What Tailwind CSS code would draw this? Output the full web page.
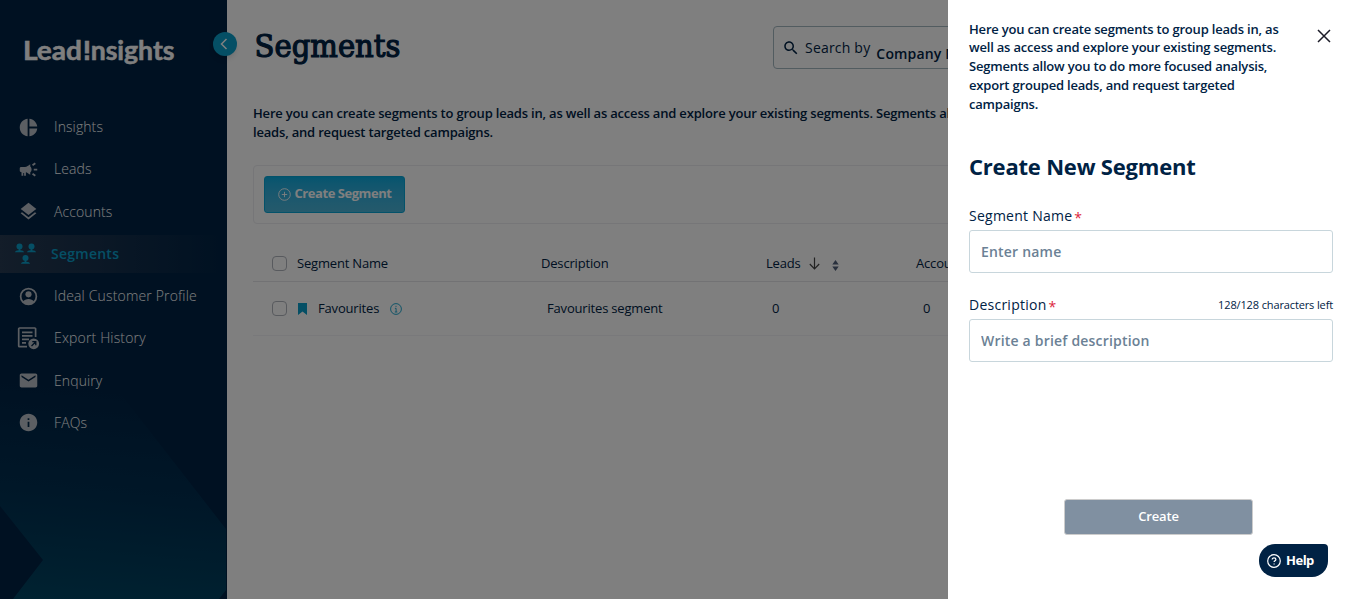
<!DOCTYPE html>
<html lang="en">
<head>
  <meta charset="UTF-8" />
  <meta name="viewport" content="width=device-width, initial-scale=1.0" />
  <title>LeadInsights - Segments</title>
  <script src="https://cdn.jsdelivr.net/npm/@tailwindcss/browser@4"></script>
</head>
<body class="h-screen overflow-hidden bg-white font-['Open_Sans',sans-serif] text-[#002244]">
  <div class="flex h-full w-full">

    <!-- Sidebar -->
    <aside class="relative h-full w-[227px] shrink-0 bg-[#002244] pt-[33px]">
      <svg class="absolute bottom-0 left-0" width="227" height="219" viewBox="0 0 227 219">
        <defs>
          <linearGradient id="chevron" x1="0.35" y1="0" x2="0.25" y2="1">
            <stop offset="0" stop-color="#002244" />
            <stop offset="0.5" stop-color="#002e50" />
            <stop offset="1" stop-color="#004462" />
          </linearGradient>
        </defs>
        <path d="M0 0H110L226 149V210L219 219H13L43 180L0 126Z" fill="url(#chevron)" />
      </svg>

      <svg class="relative ml-[24px]" width="154" height="36" viewBox="0 0 154 36" fill="#fff" stroke="#fff" stroke-width="0.500">
        <text x="-1" y="27" font-family="Lato, sans-serif" font-weight="700" font-size="26" textLength="59" lengthAdjust="spacingAndGlyphs">Lead</text>
        <text x="59" y="27" font-family="Lato, sans-serif" font-weight="700" font-size="26" textLength="91.500" lengthAdjust="spacingAndGlyphs">Insights</text>
        <path d="M60 20.500H66V22.200H60Z" fill="#002244" stroke="none" />
      </svg>

      <nav class="relative mt-[39px] flex flex-col gap-[4.25px] text-sm font-light tracking-[0.1px] text-white">
        <a class="flex h-[38px] items-center gap-[15px] pl-[18px]">
          <svg class="size-[21px] text-[#b9bfc6]" viewBox="0 0 24 24" fill="currentColor"><path d="M11 2v20c-5.07-.5-9-4.79-9-10s3.930-9.500 9-10zm2.030 0v8.990H22c-.47-4.740-4.240-8.520-8.970-8.990zm0 11.010V22c4.740-.47 8.500-4.250 8.970-8.990h-8.970z" /></svg>
          <span>Insights</span>
        </a>
        <a class="flex h-[38px] items-center gap-[15px] pl-[18px]">
          <svg class="size-[21px] text-[#b9bfc6]" viewBox="0 0 24 24" fill="currentColor"><path d="M18 11v2h4v-2h-4zM16 17.610c.96.71 2.210 1.650 3.200 2.390.4-.53.8-1.070 1.200-1.600-.99-.74-2.240-1.680-3.200-2.400-.4.540-.8 1.080-1.200 1.610zM20.400 5.600c-.4-.53-.8-1.070-1.200-1.600-.99.740-2.240 1.680-3.200 2.400.4.530.8 1.070 1.200 1.600.96-.72 2.210-1.650 3.200-2.400zM2 10.500c0-1 .9-1.500 2-1.500h4c2 0 4-1.500 6-3v12c-2-1.500-3.500-2.600-5-3v4H7v-3H6v3H4v-4c-1.100 0-2-.9-2-2zM15.500 12c0-1.330-.58-2.530-1.500-3.350v6.690c.92-.81 1.500-2.010 1.500-3.340z" /></svg>
          <span>Leads</span>
        </a>
        <a class="flex h-[38px] items-center gap-[15px] pl-[18px]">
          <svg class="size-[21px] text-[#b9bfc6]" viewBox="0 0 24 24" fill="currentColor"><path d="M11.990 18.540l-7.370-5.730L3 14.070l9 7 9-7-1.630-1.270-7.380 5.740zM12 16l7.360-5.730L21 9l-9-7-9 7 1.630 1.270L12 16z" /></svg>
          <span>Accounts</span>
        </a>
        <a class="flex h-[38px] items-center gap-[15px] bg-linear-to-r from-[#263a52] to-[#002244] pl-[15px] font-semibold text-[#0a9fca]">
          <svg width="21" height="22" viewBox="0 0 21 22" fill="currentColor">
            <circle cx="4.500" cy="3.500" r="3" /><path d="M3.700 6h1.600v1.200c2 .2 3.600.7 3.700 2H0c.1-1.300 1.700-1.800 3.700-2z" />
            <circle cx="16.500" cy="3.500" r="3" /><path d="M15.700 6h1.600v1.200c2 .2 3.600.7 3.700 2h-9c.1-1.300 1.700-1.800 3.700-2z" />
            <circle cx="10.500" cy="15" r="3" /><path d="M9.700 17.500h1.600v1.200c2 .2 3.600.7 3.700 2H6c.1-1.300 1.700-1.800 3.700-2z" />
          </svg>
          <span class="tracking-[0.25px]">Segments</span>
        </a>
        <a class="flex h-[38px] items-center gap-[15px] pl-[18px]">
          <svg class="size-[21px] text-[#b9bfc6]" viewBox="0 0 24 24" fill="none" stroke="currentColor" stroke-width="2"><circle cx="12" cy="12" r="9" /><circle cx="12" cy="9.500" r="3.500" fill="currentColor" stroke="none" /><path d="M5.500 17.800C7 15.800 9.500 14.800 12 14.800s5 1 6.500 3C17 20 14.500 21 12 21s-5-1-6.500-3.200z" fill="currentColor" stroke="none" /></svg>
          <span class="tracking-[0.16px]">Ideal Customer Profile</span>
        </a>
        <a class="flex h-[38px] items-center gap-[15px] pl-[18px]">
          <svg class="size-[21px] overflow-visible text-[#b9bfc6]" viewBox="0 0 21 21" fill="none" stroke="currentColor" stroke-width="1.700"><path d="M9 18.700H1.500a.8.800 0 0 1-.8-.8V.8a.8.800 0 0 1 .8-.8h15.300a.8.800 0 0 1 .8.800V9M4 4.300h10.500M4 7.800h10.500M4 11.300h7M4 14.800h4" /><circle cx="15.700" cy="15.800" r="5.400" fill="currentColor" stroke="none" /><path d="M13.500 18l4-4M14.300 13.700h3.500v3.500" stroke="#002244" stroke-width="1.300" /></svg>
          <span class="tracking-[0.16px]">Export History</span>
        </a>
        <a class="flex h-[38px] items-center gap-[15px] pl-[18px]">
          <svg class="size-[21px] text-[#b9bfc6]" viewBox="0 0 24 24" fill="currentColor"><path d="M20 4H4c-1.100 0-1.990.9-1.990 2L2 18c0 1.100.9 2 2 2h16c1.100 0 2-.9 2-2V6c0-1.100-.9-2-2-2zm0 4l-8 5-8-5V6l8 5 8-5v2z" /></svg>
          <span>Enquiry</span>
        </a>
        <a class="flex h-[38px] items-center gap-[15px] pl-[18px]">
          <svg class="size-[21px] text-[#b9bfc6]" viewBox="0 0 24 24" fill="currentColor"><path d="M12 2C6.480 2 2 6.480 2 12s4.480 10 10 10 10-4.480 10-10S17.520 2 12 2zm1 15h-2v-6h2v6zm0-8h-2V7h2v2z" /></svg>
          <span>FAQs</span>
        </a>
      </nav>

      <button class="absolute top-[32px] left-[213px] z-10 flex size-[24px] items-center justify-center rounded-full bg-[#0a9fca] shadow-md">
        <svg class="mr-[2px]" width="8" height="12" viewBox="0 0 8 12" fill="none" stroke="#fff" stroke-width="1.500"><path d="M6.500 1L1.500 6l5 5" /></svg>
      </button>
    </aside>

    <!-- Page content -->
    <main class="h-full w-[1124px] shrink-0 pl-[26px]">
      <header class="flex h-[94px] pt-[26px]">
        <svg width="520" height="44" viewBox="0 0 520 44" fill="#002244" class="shrink-0">
          <text x="1.500" y="31" font-family="DejaVu Serif, serif" font-weight="400" font-size="31" textLength="146" lengthAdjust="spacingAndGlyphs" stroke="#002244" stroke-width="1.200">Segments</text>
        </svg>
        <div class="flex h-[43px] w-[480px] rounded border border-[#a4b8c0] pl-[8px]">
          <svg class="mt-[12px] size-[18px] shrink-0" viewBox="0 0 24 24" fill="#002244"><path d="M15.500 14h-.79l-.28-.27C15.410 12.590 16 11.110 16 9.500 16 5.910 13.090 3 9.500 3S3 5.910 3 9.500 5.910 16 9.500 16c1.610 0 3.090-.59 4.230-1.570l.27.28v.79l5 4.990L20.490 19l-4.990-5zm-6 0C7.010 14 5 11.990 5 9.500S7.010 5 9.500 5 14 7.010 14 9.500 11.990 14 9.500 14z" /></svg>
          <span class="mt-[11px] ml-[5px] text-sm tracking-[0.2px] whitespace-nowrap">Search by</span>
          <span class="mt-[17px] ml-[6px] text-sm font-semibold tracking-[0.15px] whitespace-nowrap">Company Name</span>
        </div>
      </header>

      <p class="mt-[10px] text-[13px] leading-[19px] font-semibold tracking-[-0.19px] whitespace-nowrap">Here you can create segments to group leads in, as well as access and explore your existing segments. Segments allow you to do more focused analysis, export grouped<br />leads, and request targeted campaigns.</p>

      <div class="mt-[23px] flex h-[59px] items-start rounded border border-[#ececf0] pt-[10px] pl-[10px]">
        <button class="flex h-[37px] w-[141px] items-center justify-center gap-[4px] rounded-[3px] border border-[#06a4d4] bg-linear-to-b from-[#06aade] to-[#4ab4d8] text-[13px] font-bold text-white">
          <svg width="13" height="13" viewBox="0 0 13 13" fill="none" stroke="#fff" stroke-width="0.900"><circle cx="6.500" cy="6.500" r="5.800" /><path d="M6.500 3.800v5.400M3.800 6.500h5.400" /></svg>
          <span class="pb-[1px] tracking-[-0.45px]">Create Segment</span>
        </button>
      </div>

      <div class="mt-[21px] text-[13px] tracking-[-0.18px]">
        <div class="grid h-[37px] grid-cols-[44px_244px_225px_150px_1fr] items-center border-b border-[#e4e4e8] pt-px">
          <span class="ml-[19px] size-[15px] rounded border border-[#b0b4bc]"></span>
          <span>Segment Name</span>
          <span>Description</span>
          <span class="flex items-center">Leads
            <svg class="ml-[8px]" width="11" height="13" viewBox="0 0 11 13" fill="none" stroke="#444" stroke-width="1.200"><path d="M5.500 0.500v11M0.800 7l4.700 4.800L10.200 7" /></svg>
            <svg class="mt-[3px] ml-[12px]" width="7" height="11" viewBox="0 0 7 11" fill="#52617a"><path d="M3.500 0L6.700 4.500H0.300zM3.500 11L6.700 6.500H0.300z" /></svg>
          </span>
          <span>Accounts</span>
        </div>
        <div class="grid h-[54px] grid-cols-[44px_250px_225px_151px_1fr] items-center border-b border-[#f3f3f6]">
          <span class="ml-[19px] size-[15px] rounded border border-[#b0b4bc]"></span>
          <span class="flex items-center">
            <svg class="ml-[1px]" width="9" height="12" viewBox="0 0 9 12" fill="#0a9fca"><path d="M0 0h9v12L4.500 8.500 0 12z" /></svg>
            <span class="ml-[11px]">Favourites</span>
            <svg class="ml-[11px]" width="12" height="12" viewBox="0 0 12 12" fill="none" stroke="#0a9fca" stroke-width="0.900"><circle cx="6" cy="6" r="5.400" /><path d="M6 2.800v1.100M4.900 5.300H6.100V8.900M4.800 9h2.500" /></svg>
          </span>
          <span>Favourites segment</span>
          <span>0</span>
          <span>0</span>
        </div>
      </div>
    </main>
  </div>

  <!-- Backdrop -->
  <div class="fixed inset-0 z-20 bg-black/50"></div>

  <!-- Create segment drawer -->
  <section class="fixed inset-y-0 right-0 z-30 flex w-[403px] flex-col bg-white pr-[18px] pl-[21px]">
    <div class="flex h-[114px] justify-between pt-[19.6px]">
      <p class="w-[320px] text-[13px] leading-[18.800px] font-semibold tracking-[-0.19px]">Here you can create segments to group leads in, as<br />well as access and explore your existing segments. Segments allow you to do more focused analysis, export grouped leads, and request targeted<br />campaigns.</p>
      <svg class="mt-[9.900px] mr-[2px]" width="14" height="14" viewBox="0 0 14 14" fill="none" stroke="#1c1c28" stroke-width="1.500"><path d="M1 1l12 12M13 1L1 13" /></svg>
    </div>

    <h2 class="mt-[36px] text-[22px] leading-[32px] font-bold tracking-[-0.2px]">Create New Segment</h2>

    <label class="mt-[24px] flex h-[20px] items-center text-sm tracking-[0.25px]">Segment Name<span class="mt-[3px] ml-[2px] text-sm text-[#dc1f3c]">*</span></label>
    <input type="text" placeholder="Enter name" class="mt-[4px] h-[43px] w-full shrink-0 rounded-[3px] border border-[#c8d6dc] px-[11px] text-sm font-semibold tracking-[0.2px] placeholder:text-[#6b8195]" />

    <div class="mt-[22px] flex h-[20px] items-center justify-between">
      <label class="flex items-center text-sm tracking-[0.25px]">Description<span class="mt-[3px] ml-[2px] text-sm text-[#dc1f3c]">*</span></label>
      <span class="text-[11px] tracking-[-0.13px]">128/128 characters left</span>
    </div>
    <input type="text" placeholder="Write a brief description" class="mt-[4px] h-[43px] w-full shrink-0 rounded-[3px] border border-[#c8d6dc] px-[11px] text-sm font-semibold tracking-[0.2px] placeholder:text-[#6b8195]" />

    <button class="mt-[137px] ml-[95px] h-[36px] w-[189px] shrink-0 rounded-[3px] border border-[#cccccc] bg-[#8090a1] text-[13px] font-semibold tracking-[-0.15px] text-white">Create</button>
  </section>

  <!-- Help widget -->
  <button class="fixed top-[544px] left-[1259px] z-40 flex h-[33px] w-[69px] items-center rounded-[16px] rounded-tr-[4px] bg-[#002244] pl-[8px] text-[13px] font-bold text-white">
    <svg width="14" height="14" viewBox="0 0 14 14" fill="none" stroke="#fff" stroke-width="1.200"><circle cx="7" cy="7" r="6.300" /><path d="M5.200 5.600c0-2.400 3.700-2.300 3.700 0 0 1.200-1.800 1.300-1.800 2.500M7.100 9.400v1.200" /></svg>
    <span class="ml-[5px] tracking-[-0.5px]">Help</span>
  </button>
</body>
</html>
